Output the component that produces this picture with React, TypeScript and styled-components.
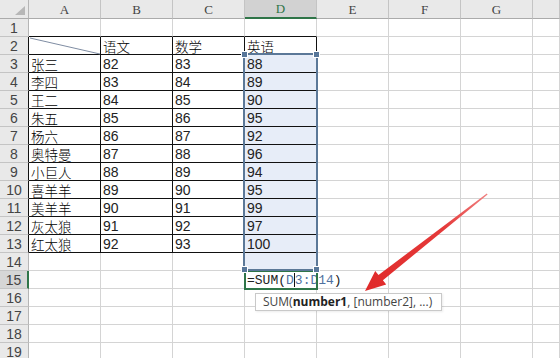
import React from "react";
import styled, { createGlobalStyle } from "styled-components";

const GRID = "#d4d4d4";
const INK = "#111";
const GREEN = "#2f7548";

const cols = ["A", "B", "C", "D", "E", "F", "G", "H"];
const rows = Array.from({ length: 19 }, (_, i) => i + 1);

const table: string[][] = [
  ["", "语文", "数学", "英语"],
  ["张三", "82", "83", "88"],
  ["李四", "83", "84", "89"],
  ["王二", "84", "85", "90"],
  ["朱五", "85", "86", "95"],
  ["杨六", "86", "87", "92"],
  ["奥特曼", "87", "88", "96"],
  ["小巨人", "88", "89", "94"],
  ["喜羊羊", "89", "90", "95"],
  ["美羊羊", "90", "91", "99"],
  ["灰太狼", "91", "92", "97"],
  ["红太狼", "92", "93", "100"],
];

const valueAt = (r: number, c: number) => {
  if (r >= 2 && r <= 13 && c <= 3) return table[r - 2][c];
  return "";
};

const App: React.FC = () => {
  return (
    <>
      <GlobalStyle />
      <Frame>
        <Sheet>
          <Corner>
            <svg width="29" height="19">
              <polygon points="25,6 25,15 15,15" fill="#b7b7b7" />
            </svg>
          </Corner>
          {cols.map((c) => (
            <ColHead key={c} $active={c === "D"}>
              {c === "H" ? "" : c}
            </ColHead>
          ))}

          {rows.map((r) => (
            <React.Fragment key={r}>
              <RowHead
                $active={r === 15}
                $edge={r >= 2 && r <= 13 ? INK : r === 15 ? GREEN : "#b5b5b5"}
              >
                {r}
              </RowHead>
              {cols.map((col, c) => {
                const inTable = r >= 2 && r <= 13 && c <= 3;
                const text = valueAt(r, c);
                const isFormula = r === 15 && c === 3;
                return (
                  <Cell
                    key={col}
                    $right={inTable ? INK : GRID}
                    $bottom={r >= 1 && r <= 13 && c <= 3 ? INK : GRID}
                    $fill={c === 3 && r >= 3 && r <= 14 ? "#e7edf8" : "#fff"}
                    $active={isFormula}
                    $cjk={/[\u4e00-\u9fff]/.test(text)}
                  >
                    {r === 2 && c === 0 && (
                      <Diagonal width="72" height="18">
                        <line x1="1" y1="1" x2="71" y2="17" stroke="#7f8da3" strokeWidth="1" />
                      </Diagonal>
                    )}
                    {isFormula ? (
                      <Formula>
                        =SUM(<Ref>D</Ref>
                        <Caret />
                        <Ref>3:D14</Ref>)
                      </Formula>
                    ) : (
                      text
                    )}
                  </Cell>
                );
              })}
            </React.Fragment>
          ))}

          <Range>
            <Handle style={{ left: -4, top: -4 }} />
            <Handle style={{ right: -4, top: -4 }} />
            <Handle style={{ left: -4, bottom: -4 }} />
            <Handle style={{ right: -4, bottom: -4 }} />
          </Range>

          <Tip>
            SUM(<b>number1</b>, [number2], ...)
          </Tip>

          <Arrow width="560" height="358" viewBox="0 0 560 358">
            <defs>
              <linearGradient id="ar" x1="487" y1="194" x2="365" y2="290" gradientUnits="userSpaceOnUse">
                <stop offset="0" stopColor="#f08080" />
                <stop offset="0.35" stopColor="#e53a3a" />
                <stop offset="1" stopColor="#e02a2a" />
              </linearGradient>
            </defs>
            <polygon
              points="487.6,194.5 382.9,280.2 386.2,284.4 365,291 375.2,270.9 378.5,275 486.8,193.5"
              fill="url(#ar)"
            />
          </Arrow>
        </Sheet>
      </Frame>
    </>
  );
};

export default App;

/* ------------------- Styled Components ------------------- */
const GlobalStyle = createGlobalStyle`
  html, body {
    margin: 0;
    padding: 0;
    background: #fff;
    overflow: hidden;
  }
`;

const Frame = styled.div`
  width: 560px;
  height: 358px;
  overflow: hidden;
`;

const Sheet = styled.div`
  position: relative;
  display: grid;
  grid-template-columns: 29px repeat(7, 72px) 27px;
  grid-template-rows: 19px;
  grid-auto-rows: 18px;
  width: 560px;
  font-family: "Liberation Sans", Arial, sans-serif;
`;

const Corner = styled.div`
  background: #e9e9e9;
  border-right: 1px solid #b5b5b5;
  border-bottom: 1px solid #ababab;
  box-sizing: border-box;
  svg {
    display: block;
  }
`;

const ColHead = styled.div<{ $active?: boolean }>`
  box-sizing: border-box;
  display: flex;
  align-items: center;
  justify-content: center;
  background: ${(p) => (p.$active ? "#d2d2d2" : "#e9e9e9")};
  border-right: 1px solid #c4c4c4;
  border-bottom: ${(p) => (p.$active ? `2px solid ${GREEN}` : "1px solid #ababab")};
  color: ${(p) => (p.$active ? GREEN : "#444")};
  font-family: "Liberation Serif", "Times New Roman", serif;
  font-size: 13px;
  padding-top: 1px;
`;

const RowHead = styled.div<{ $active?: boolean; $edge: string }>`
  box-sizing: border-box;
  display: flex;
  align-items: flex-end;
  justify-content: center;
  background: ${(p) => (p.$active ? "#d6d6d6" : "#e9e9e9")};
  border-bottom: 1px solid #c4c4c4;
  border-right: ${(p) => (p.$active ? "2px" : "1px")} solid ${(p) => p.$edge};
  color: #444;
  font-size: 14px;
  line-height: 16px;
  overflow: hidden;
`;

const Cell = styled.div<{
  $right: string;
  $bottom: string;
  $fill: string;
  $active?: boolean;
  $cjk?: boolean;
}>`
  position: relative;
  box-sizing: border-box;
  display: flex;
  align-items: flex-end;
  padding: 0 0 0 2px;
  background: ${(p) => p.$fill};
  border-right: 1px solid ${(p) => p.$right};
  border-bottom: 1px solid ${(p) => p.$bottom};
  outline: ${(p) => (p.$active ? `2px solid ${GREEN}` : "none")};
  outline-offset: -1px;
  z-index: ${(p) => (p.$active ? 2 : "auto")};
  color: ${(p) => (p.$cjk ? "#000" : "#222")};
  font-family: ${(p) =>
    p.$cjk ? `"Noto Sans CJK SC", sans-serif` : `"Liberation Sans", Arial, sans-serif`};
  font-size: ${(p) => (p.$cjk ? "13.5px" : "14px")};
  font-weight: ${(p) => (p.$cjk ? 300 : 400)};
  line-height: 15px;
  white-space: nowrap;
  overflow: visible;
`;

const Diagonal = styled.svg`
  position: absolute;
  left: 0;
  top: 0;
`;

const Formula = styled.span`
  font-family: "Liberation Mono", "Courier New", monospace;
  font-size: 13px;
  color: #222;
  display: inline-flex;
  align-items: flex-end;
`;

const Ref = styled.span`
  color: #5071a0;
`;

const Caret = styled.span`
  display: inline-block;
  width: 1px;
  height: 14px;
  background: #111;
  margin-bottom: 1px;
`;

const Range = styled.div`
  position: absolute;
  left: 243px;
  top: 53px;
  width: 75px;
  height: 218px;
  box-sizing: border-box;
  border: 2px solid #5b7898;
  pointer-events: none;
  z-index: 3;
`;

const Handle = styled.span`
  position: absolute;
  width: 5px;
  height: 5px;
  background: #58779a;
  border: 1px solid #fff;
`;

const Tip = styled.div`
  position: absolute;
  left: 255px;
  top: 293px;
  width: 187px;
  height: 18px;
  box-sizing: border-box;
  padding: 1px 0 0 7px;
  background: #fff;
  border: 1px solid #c9c9c9;
  box-shadow: 1px 1px 2px rgba(0, 0, 0, 0.08);
  color: #444;
  font-family: "Open Sans", "Liberation Sans", sans-serif;
  font-size: 12px;
  line-height: 14px;
  white-space: nowrap;
  z-index: 4;
  b {
    color: #222;
    font-weight: 700;
  }
`;

const Arrow = styled.svg`
  position: absolute;
  left: 0;
  top: 0;
  pointer-events: none;
  z-index: 5;
`;
